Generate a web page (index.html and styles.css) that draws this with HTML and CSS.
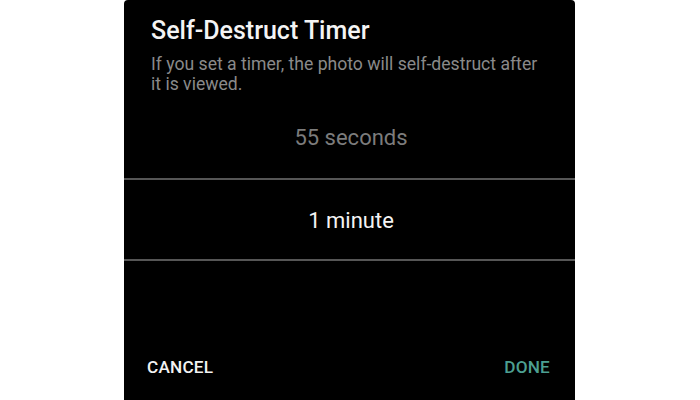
FILE: index.html
```html
<!DOCTYPE html>
<html lang="en">
<head>
<meta charset="utf-8">
<title>Self-Destruct Timer</title>
<link rel="stylesheet" href="styles.css">
</head>
<body>
<div class="dialog">
  <h1 class="title">Self-Destruct Timer</h1>
  <p class="subtitle">If you set a timer, the photo will self-destruct after it is viewed.</p>
  <div class="picker">
    <div class="item dim">55 seconds</div>
    <div class="item selected">1 minute</div>
  </div>
  <div class="actions">
    <span class="btn cancel">CANCEL</span>
    <span class="btn done">DONE</span>
  </div>
</div>
</body>
</html>
```
FILE: styles.css
```css
html, body {
  margin: 0;
  padding: 0;
  background: #ffffff;
}
body {
  width: 700px;
  height: 400px;
  overflow: hidden;
  font-family: Roboto, "Liberation Sans", sans-serif;
}
.dialog {
  margin-left: 124px;
  width: 451px;
  height: 400px;
  background: #000000;
  border-radius: 4px 4px 0 0;
  display: flex;
  flex-direction: column;
  box-sizing: border-box;
  padding-top: 16px;
}
.title {
  margin: 0;
  padding-left: 27px;
  font-size: 25px;
  line-height: 30px;
  font-weight: 500;
  color: #f4f4f4;
}
.subtitle {
  margin: 8px 0 3px 0;
  padding: 0 30px 0 27px;
  font-size: 17.6px;
  line-height: 20px;
  color: #8a8a8a;
}
.picker {
  display: flex;
  flex-direction: column;
}
.item {
  display: flex;
  align-items: center;
  justify-content: center;
  font-size: 22px;
  height: 81px;
  padding-left: 3px;
}
.item.dim {
  color: #7c7c7c;
}
.item.selected {
  height: 79px;
  color: #f4f4f4;
  border-top: 2px solid #565656;
  border-bottom: 2px solid #565656;
  padding-top: 2px;
  box-sizing: content-box;
  height: 77px;
}
.actions {
  margin-top: 96px;
  display: flex;
  justify-content: space-between;
  padding: 0 25px 0 23px;
}
.btn {
  font-size: 17.2px;
  line-height: 20px;
  font-weight: 500;
  letter-spacing: 0.2px;
}
.cancel {
  color: #f2f2f2;
}
.done {
  color: #4c9f91;
}
```
